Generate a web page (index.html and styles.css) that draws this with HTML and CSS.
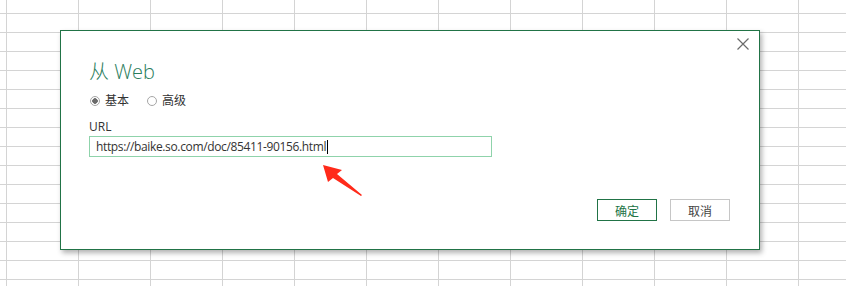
FILE: index.html
```html
<!DOCTYPE html>
<html lang="zh-CN">
<head>
  <meta charset="UTF-8" />
  <title>从 Web</title>
  <link rel="stylesheet" href="styles.css">
</head>
<body>
  <div class="sheet">
    <div class="dialog">
      <button class="close" aria-label="关闭">
        <svg width="12" height="12" viewBox="0 0 12 12"><path d="M0.5 0.5 L11.5 11.5 M11.5 0.5 L0.5 11.5" stroke="#6b6b6b" stroke-width="1.2" fill="none"/></svg>
      </button>

      <div class="title">从 Web</div>

      <div class="modes">
        <label class="radio checked"><span class="dot"></span>基本</label>
        <label class="radio"><span class="dot"></span>高级</label>
      </div>

      <div class="field-label">URL</div>
      <div class="url-input">https://baike.so.com/doc/85411-90156.html<span class="caret"></span></div>

      <div class="actions">
        <button class="btn primary">确定</button>
        <button class="btn">取消</button>
      </div>

      <svg class="arrow" width="46" height="38" viewBox="0 0 46 38">
        <path d="M3 3 L22 8 L17 12 L42 33 L41 34 L13 16 L8 20 Z" fill="#ff2a1a"/>
      </svg>
    </div>
  </div>
</body>
</html>
```

FILE: styles.css
```css
body {
  margin: 0;
  font-family: "Open Sans", "Noto Sans CJK SC", sans-serif;
  color: #333;
  background: #fff;
}
.sheet {
  height: 286px;
  padding: 30px 0 0 60px;
  box-sizing: border-box;
  background-image:
    linear-gradient(to right, #d4d4d4 1px, transparent 1px),
    linear-gradient(to bottom, #d4d4d4 1px, transparent 1px);
  background-size: 72px 19px;
  background-position: 6px 13px;
}
.dialog {
  position: relative;
  box-sizing: border-box;
  width: 700px;
  height: 220px;
  padding: 0 29px 0 28px;
  background: #fff;
  border: 1px solid #217346;
  box-shadow: 2px 3px 5px rgba(0, 0, 0, 0.3);
}
.close {
  position: absolute;
  top: 7px;
  right: 10px;
  padding: 0;
  border: none;
  background: none;
  line-height: 0;
}
.title {
  margin-top: 27px;
  font-size: 20px;
  font-weight: 300;
  line-height: 28px;
  color: #2b7d5c;
}
.modes {
  display: flex;
  gap: 17px;
  margin-top: 7px;
  font-size: 12px;
  line-height: 16px;
}
.radio {
  display: flex;
  align-items: center;
  gap: 5px;
}
.dot {
  box-sizing: border-box;
  width: 10px;
  height: 10px;
  border: 1px solid #a6a6a6;
  border-radius: 50%;
  margin-left: 1px;
}
.radio.checked .dot {
  background: radial-gradient(circle, #6b6b6b 0 2.5px, #fff 3px);
}
.field-label {
  margin-top: 10px;
  font-size: 12px;
  line-height: 16px;
}
.url-input {
  box-sizing: border-box;
  width: 403px;
  height: 21px;
  margin-top: 1px;
  padding: 0 6px;
  border: 1px solid #8fd3ab;
  font-size: 12px;
  letter-spacing: -0.36px;
  line-height: 19px;
  display: flex;
  align-items: center;
}
.caret {
  width: 1px;
  height: 14px;
  margin-left: 1px;
  background: #000;
}
.actions {
  display: flex;
  justify-content: flex-end;
  gap: 13px;
  margin-top: 42px;
}
.btn {
  box-sizing: border-box;
  width: 60px;
  height: 22px;
  padding: 0;
  background: #fff;
  border: 1px solid #c6c6c6;
  font-family: "Noto Sans CJK SC", sans-serif;
  font-size: 12px;
  color: #444;
}
.btn.primary {
  border-color: #217346;
  color: #217346;
}
.arrow {
  position: absolute;
  left: 259px;
  top: 131px;
}
```
